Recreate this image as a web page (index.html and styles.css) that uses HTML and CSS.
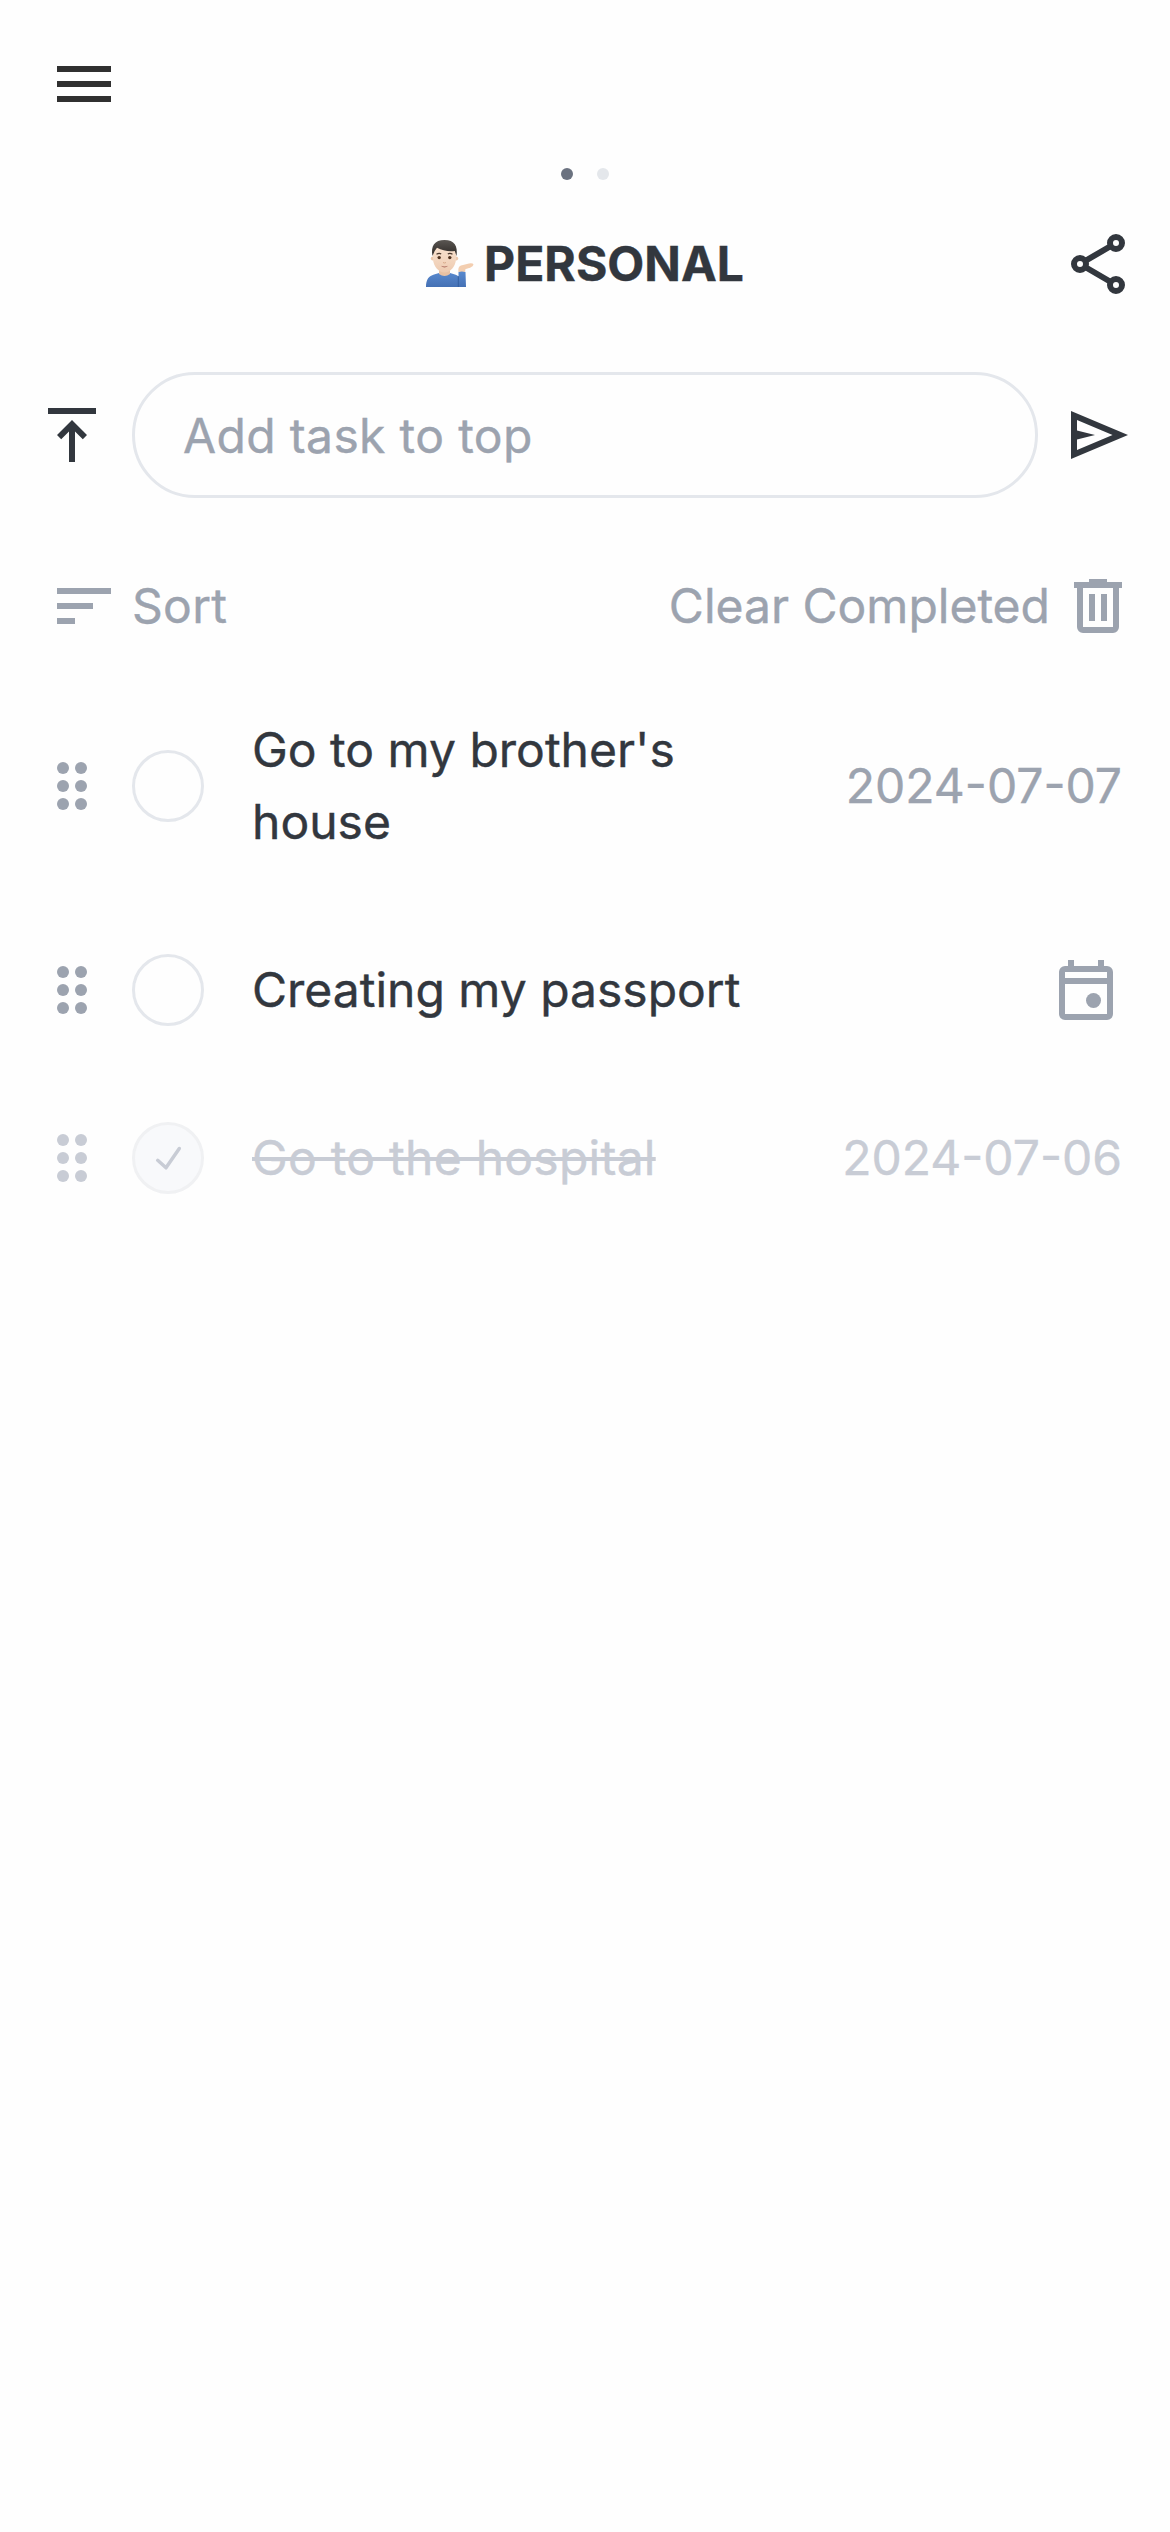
FILE: index.html
```html
<!DOCTYPE html>
<html lang="en">
<head>
<meta charset="utf-8">
<title>Personal</title>
<link rel="stylesheet" href="styles.css">
</head>
<body>
<svg class="defs" width="0" height="0" aria-hidden="true">
  <symbol id="drag" viewBox="0 0 24 24"><circle cx="9" cy="6" r="2"/><circle cx="15" cy="6" r="2"/><circle cx="9" cy="12" r="2"/><circle cx="15" cy="12" r="2"/><circle cx="9" cy="18" r="2"/><circle cx="15" cy="18" r="2"/></symbol>
</svg>
<main class="screen">
  <header class="topbar">
    <svg class="icon menu" viewBox="0 0 24 24"><path d="M3 6h18v2H3zM3 11h18v2H3zM3 16h18v2H3z"/></svg>
  </header>
  <nav class="pager"><span class="dot active"></span><span class="dot"></span></nav>
  <section class="heading">
    <h1 class="title">
      <svg class="avatar" viewBox="0 0 48 48">
        <defs>
          <linearGradient id="shirt" x1="0" y1="0" x2="0" y2="1"><stop offset="0" stop-color="#5a8bd0"/><stop offset="1" stop-color="#4470b4"/></linearGradient>
          <linearGradient id="hair" x1="0" y1="0" x2="0" y2="1"><stop offset="0" stop-color="#5a5652"/><stop offset="1" stop-color="#2e2926"/></linearGradient>
          <linearGradient id="skin" x1="0" y1="0" x2="0" y2="1"><stop offset="0" stop-color="#fae3d0"/><stop offset="1" stop-color="#edcab0"/></linearGradient>
        </defs>
        <path d="M0 47C0 39 3 36 8 34.500L13 33H24L29 34.500Q32 35 32.500 37V32Q36 29.500 39.500 32L40 47Z" fill="url(#shirt)"/>
        <path d="M32.300 36V47" stroke="#315c9c" stroke-width=".9"/>
        <path d="M13 29H24V34Q18.500 38 13 34Z" fill="#e8c1a3"/>
        <path d="M32.500 32C32 28 33 25.500 36 25.200L43 23.400Q47 22.800 47.500 24.600C47 27 43 28.500 39.500 29L39 32Q36 31 32.500 32Z" fill="#f3ceb0"/>
        <circle cx="6.800" cy="18.500" r="2" fill="#edc9ad"/><circle cx="30.200" cy="18.500" r="2" fill="#edc9ad"/>
        <path d="M7 9Q18 3 30 9V19C29.500 27 24 32.500 18.500 32.500S7.500 27 7 19Z" fill="url(#skin)"/>
        <path d="M6.500 16C4.500 6 8.500 0 18.500 0S32 6 30.500 16L28.800 11Q19 12 11 7.800Q8 11 6.500 16Z" fill="url(#hair)"/>
        <path d="M10.500 14.300Q13 12.800 15.200 14M21.800 14Q24 12.800 26.500 14.300" fill="none" stroke="#4c3a2f" stroke-width="1.300"/>
        <circle cx="13.200" cy="17.600" r="1.700" fill="#50331f"/><circle cx="23.800" cy="17.600" r="1.700" fill="#50331f"/>
        <path d="M17 22.500Q18.500 23.500 20 22.500" fill="none" stroke="#d7a98a" stroke-width="1"/>
        <path d="M14.800 25.800Q18.500 27.300 22.200 25.800Q18.500 29.300 14.800 25.800Z" fill="#a9695c"/>
      </svg>
      <span>PERSONAL</span>
    </h1>
    <svg class="icon share" viewBox="0 0 24 24"><path d="M6 12 18 5M6 12l12 7" fill="none" stroke="currentColor" stroke-width="2"/><g class="nodes"><circle cx="18" cy="5" r="2"/><circle cx="6" cy="12" r="2"/><circle cx="18" cy="19" r="2"/></g></svg>
  </section>
  <form class="composer">
    <svg class="icon" viewBox="0 0 24 24"><path d="M4 3h16v2H4zM11 21V10.850l-2.600 2.550L7 12l5-5 5 5-1.400 1.400-2.600-2.550V21z"/></svg>
    <input class="field" type="text" placeholder="Add task to top">
    <svg class="icon" viewBox="0 0 24 24"><path d="M3 20V4l19 8zm2-3 11.850-5L5 7v3.500l6 1.500-6 1.500z"/></svg>
  </form>
  <section class="tools">
    <span class="tool sort"><svg class="icon" viewBox="0 0 24 24"><path d="M3 6h18v2H3zM3 11h12v2H3zM3 16h6v2H3z"/></svg>Sort</span>
    <span class="tool clear">Clear Completed<svg class="icon" viewBox="0 0 24 24"><path fill-rule="evenodd" d="M7 21q-.825 0-1.413-.587T5 19V6H4V4h5V3h6v1h5v2h-1v13q0 .825-.587 1.413T17 21zM17 6H7v13h10zM9 17h2V8H9zm4 0h2V8h-2z"/></svg></span>
  </section>
  <ul class="tasks">
    <li class="task">
      <svg class="icon muted" viewBox="0 0 24 24"><use href="#drag"/></svg>
      <span class="check"></span>
      <span class="label">Go to my brother's house</span>
      <time class="date">2024-07-07</time>
    </li>
    <li class="task">
      <svg class="icon muted" viewBox="0 0 24 24"><use href="#drag"/></svg>
      <span class="check"></span>
      <span class="label">Creating my passport</span>
      <svg class="icon muted" viewBox="0 0 24 24"><path fill-rule="evenodd" d="M5 22q-.825 0-1.413-.587T3 20V6q0-.825.587-1.413T5 4h1V2h2v2h8V2h2v2h1q.825 0 1.413.587T21 6v14q0 .825-.587 1.413T19 22zM5 20h14V10H5zM5 8h14V6H5z"/><circle cx="14.500" cy="15.500" r="2.500"/></svg>
    </li>
    <li class="task done">
      <svg class="icon muted" viewBox="0 0 24 24"><use href="#drag"/></svg>
      <span class="check"><svg class="tick" viewBox="0 0 66 66"><path d="M22.700 35.300 31 42.800 44.300 23.500"/></svg></span>
      <span class="label">Go to the hospital</span>
      <time class="date">2024-07-06</time>
    </li>
  </ul>
</main>
</body>
</html>
```

FILE: styles.css
```css
* { box-sizing: border-box; }

body {
  margin: 0;
  background: #fefefe;
  color: #32373e;
  font: 400 48px/72px Inter, sans-serif;
  -webkit-text-stroke: 0.4px currentColor;
}

.defs { display: block; height: 0; }

.screen {
  min-height: 2532px;
  padding: 48px 36px 0;
}

.icon {
  display: block;
  flex: none;
  width: 72px;
  height: 72px;
  fill: currentColor;
}

.topbar { padding-left: 12px; }
.menu { color: #303030; }

.pager {
  display: flex;
  justify-content: center;
  gap: 24px;
  padding-top: 48px;
}
.dot { width: 12px; height: 12px; border-radius: 50%; background: #e4e7eb; }
.dot.active { background: #6b7280; }

.heading {
  display: grid;
  grid-template-columns: 72px 1fr 72px;
  align-items: center;
  margin-top: 48px;
}
.share { grid-column: 3; }
.title {
  grid-column: 2;
  display: flex;
  justify-content: center;
  align-items: center;
  gap: 10px;
  margin: 0;
  font-size: 48px;
  font-weight: 700;
}
.avatar { width: 48px; height: 48px; }
.nodes { fill: #fefefe; stroke: currentColor; stroke-width: 2; }

.composer {
  display: flex;
  align-items: center;
  gap: 24px;
  margin: 72px 0 0;
}
.field {
  flex: 1;
  min-width: 0;
  height: 126px;
  padding: 0 48px;
  border: 3px solid #e4e7ec;
  border-radius: 63px;
  background: transparent;
  color: inherit;
  font: inherit;
  letter-spacing: 0.35px;
  outline: none;
}
.field::placeholder { color: #9ca3af; opacity: 1; -webkit-text-stroke: 0.4px #9ca3af; }

.tools {
  display: flex;
  justify-content: space-between;
  margin: 72px 0 0 12px;
  color: #9ca3af;
}
.tool { display: flex; align-items: center; gap: 12px; }
.sort { letter-spacing: 0.3px; }

.tasks {
  display: flex;
  flex-direction: column;
  gap: 96px;
  margin: 72px 12px 0 0;
  padding: 0;
  list-style: none;
}
.task { display: flex; align-items: center; }
.muted, .date { color: #9ca3af; }
.check {
  flex: none;
  width: 72px;
  height: 72px;
  margin: 0 48px 0 24px;
  border: 3px solid #e4e7ec;
  border-radius: 50%;
}
.label { flex: 1; margin-right: 48px; }
.date { white-space: nowrap; }

.done .muted, .done .date, .done .label { color: #c8ccd5; }
.done .label {
  letter-spacing: 0.25px;
  text-decoration: line-through;
  text-decoration-thickness: 4px;
}
.done .check { background: #f8f9fb; border-color: #f0f1f3; }
.tick { display: block; fill: none; stroke: #c8ccd5; stroke-width: 3.5; stroke-linecap: round; stroke-linejoin: round; }
```
